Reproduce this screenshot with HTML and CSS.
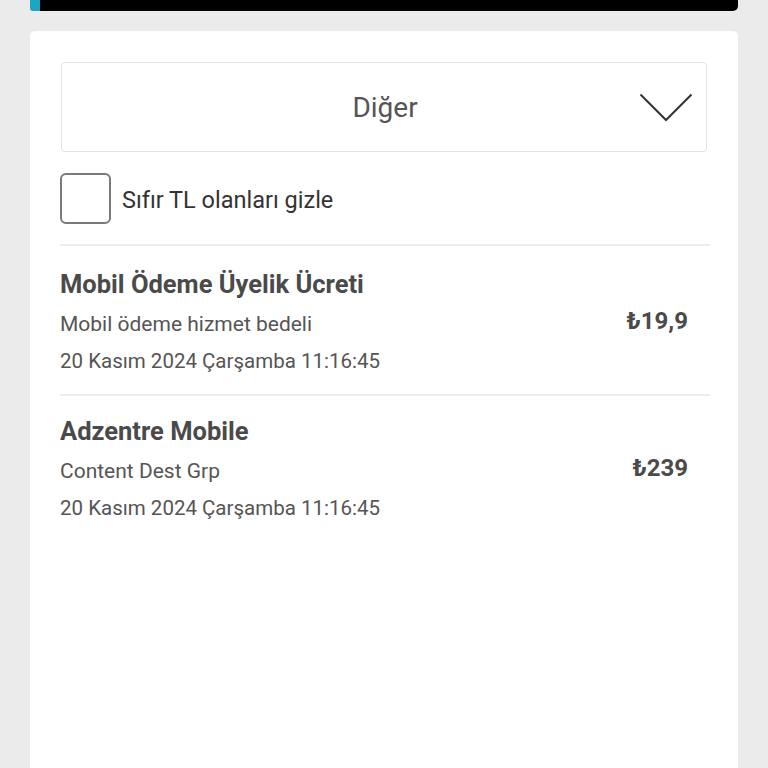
FILE: index.html
```html
<!DOCTYPE html>
<html lang="tr">
<head>
<meta charset="utf-8">
<link rel="stylesheet" href="styles.css">
</head>
<body>
<div class="page">
  <div class="topbar"><div class="accent"></div><div class="bar"></div></div>
  <div class="card">
    <div class="select">
      <span class="select-text">Diğer</span>
      <svg class="chevron" width="54" height="30" viewBox="0 0 54 30"><path d="M1.5 1.5 L27 27 L52.5 1.5" fill="none" stroke="#333" stroke-width="2"/></svg>
    </div>
    <label class="check-row">
      <span class="checkbox"></span>
      <span class="check-label">Sıfır TL olanları gizle</span>
    </label>
    <div class="item">
      <div class="item-info">
        <div class="item-title">Mobil Ödeme Üyelik Ücreti</div>
        <div class="item-sub">Mobil ödeme hizmet bedeli</div>
        <div class="item-date">20 Kasım 2024 Çarşamba 11:16:45</div>
      </div>
      <div class="item-price">₺19,9</div>
    </div>
    <div class="item">
      <div class="item-info">
        <div class="item-title">Adzentre Mobile</div>
        <div class="item-sub">Content Dest Grp</div>
        <div class="item-date">20 Kasım 2024 Çarşamba 11:16:45</div>
      </div>
      <div class="item-price">₺239</div>
    </div>
  </div>
</div>
</body>
</html>
```
FILE: styles.css
```css
* { box-sizing: border-box; }
html, body { margin: 0; padding: 0; height: 100%; }
body {
  background: #ebebeb;
  font-family: Roboto, "DejaVu Sans", sans-serif;
  color: #444;
  overflow: hidden;
}
.page {
  padding: 0 30px;
  display: flex;
  flex-direction: column;
  gap: 20px;
  height: 100%;
}
.topbar {
  display: flex;
  height: 11px;
}
.accent { width: 10px; background: #1aa6c4; border-bottom-left-radius: 3px; }
.bar { flex: 1; background: #000; border-bottom-right-radius: 5px; }
.card {
  flex: 1;
  background: #fff;
  border-radius: 5px 5px 0 0;
  padding: 31px 30px 0 30px;
}
.select {
  margin: 0 1px 0 1px;
  height: 90px;
  border: 1px solid #e3e3e3;
  border-radius: 4px;
  display: flex;
  align-items: center;
  justify-content: center;
  position: relative;
}
.select-text { font-size: 28px; color: #555; margin-left: 2px; }
.chevron { position: absolute; right: 13px; top: 30px; }
.check-row {
  display: flex;
  align-items: center;
  gap: 11px;
  margin-top: 21px;
  padding-bottom: 20px;
  border-bottom: 2px solid #ececec;
  margin-right: -2px;
}
.checkbox {
  width: 51px; height: 51px;
  border: 2px solid #7a7a7a;
  border-radius: 6px;
}
.check-label { font-size: 23.5px; color: #333; margin-top: 2px; }
.item {
  display: flex;
  align-items: center;
  padding: 20px 22px 20px 0;
  border-bottom: 2px solid #ececec;
  margin-right: -2px;
}
.check-row + .item { padding-top: 23px; }
.item:last-child { border-bottom: none; }
.item-info { flex: 1; display: flex; flex-direction: column; }
.item-title { font-size: 25.5px; font-weight: 700; color: #4a4a4a; line-height: 30px; }
.item-sub { font-size: 21px; color: #555; line-height: 26px; margin-top: 12px; }
.item-date { font-size: 20.5px; color: #555; line-height: 26px; margin-top: 11px; }
.item-price { font-size: 24px; font-weight: 700; color: #4a4a4a; margin-top: -1px; }
```
